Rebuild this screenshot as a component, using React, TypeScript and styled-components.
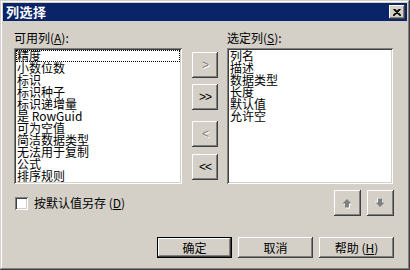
import React from 'react';
import styled, { createGlobalStyle } from 'styled-components';

const GlobalStyle = createGlobalStyle`
  html, body {
    margin: 0;
    padding: 0;
    background: #d4d0c8;
  }
  body {
    font-family: "Noto Sans CJK SC", "Liberation Sans", sans-serif;
    font-size: 12px;
    color: #000;
  }
`;

const raised = `
  box-shadow: inset -1px -1px #404040, inset 1px 1px #ffffff,
    inset -2px -2px #808080, inset 2px 2px #d4d0c8;
`;

const Window = styled.div`
  width: 410px;
  height: 270px;
  box-sizing: border-box;
  padding: 3px;
  background: #d4d0c8;
  box-shadow: inset -1px -1px #404040, inset 1px 1px #d4d0c8,
    inset -2px -2px #808080, inset 2px 2px #ffffff;
  display: flex;
  flex-direction: column;
`;

const TitleBar = styled.div`
  height: 18px;
  background: #0a246a;
  color: #fff;
  display: flex;
  align-items: center;
  justify-content: space-between;
  padding: 0 2px 0 3px;
`;

const Title = styled.span`
  font-weight: bold;
  font-size: 13px;
  line-height: 18px;
  letter-spacing: 0.5px;
`;

const CloseButton = styled.div`
  width: 16px;
  height: 14px;
  background: #d4d0c8;
  ${raised}
  display: flex;
  align-items: center;
  justify-content: center;
`;

const Body = styled.div`
  padding: 10px 13px 0 11px;
  display: flex;
  flex-direction: column;
`;

const Columns = styled.div`
  display: flex;
`;

const ListColumn = styled.div<{ $width: number; $gap: number }>`
  width: ${p => p.$width}px;
  margin-right: ${p => p.$gap}px;
  display: flex;
  flex-direction: column;
`;

const Label = styled.div`
  height: 17px;
  line-height: 14px;
  white-space: nowrap;
`;

const ListBox = styled.div`
  height: 136px;
  box-sizing: border-box;
  background: #fff;
  padding: 2px 2px;
  box-shadow: inset 1px 1px #808080, inset -1px -1px #ffffff,
    inset 2px 2px #404040, inset -2px -2px #d4d0c8;
  overflow: hidden;
`;

const ListItem = styled.div<{ $focused?: boolean }>`
  height: 12px;
  line-height: 12px;
  padding-left: 1px;
  white-space: nowrap;
  outline: ${p => (p.$focused ? '1px dotted #000' : 'none')};
  outline-offset: -1px;
`;

const ButtonColumn = styled.div`
  width: 26px;
  margin-right: 9px;
  padding-top: 21px;
  display: flex;
  flex-direction: column;
`;

const MoveButton = styled.div<{ $top: number; $disabled?: boolean }>`
  width: 26px;
  height: 26px;
  margin-top: ${p => p.$top}px;
  background: #d4d0c8;
  ${raised}
  display: flex;
  align-items: center;
  justify-content: center;
  font-family: "Liberation Sans", sans-serif;
  font-size: 12px;
  letter-spacing: -1px;
  color: ${p => (p.$disabled ? '#808080' : '#000')};
  text-shadow: ${p => (p.$disabled ? '1px 1px #ffffff' : 'none')};
`;

const OptionsRow = styled.div`
  margin-top: 6px;
  height: 26px;
  display: flex;
  align-items: center;
  justify-content: space-between;
`;

const CheckLabel = styled.label`
  display: flex;
  align-items: center;
  gap: 6px;
  padding-left: 1px;
  line-height: 14px;
`;

const CheckBox = styled.span`
  width: 13px;
  height: 13px;
  box-sizing: border-box;
  background: #fff;
  box-shadow: inset 1px 1px #808080, inset -1px -1px #ffffff,
    inset 2px 2px #404040, inset -2px -2px #d4d0c8;
`;

const OrderButtons = styled.div`
  display: flex;
  gap: 6px;
`;

const OrderButton = styled.div`
  width: 27px;
  height: 26px;
  background: #d4d0c8;
  ${raised}
  display: flex;
  align-items: center;
  justify-content: center;
`;

const Footer = styled.div`
  margin-top: 21px;
  display: flex;
  justify-content: flex-end;
  gap: 6px;
`;

const DialogButton = styled.div<{ $default?: boolean }>`
  width: 75px;
  height: 21px;
  box-sizing: border-box;
  background: #d4d0c8;
  display: flex;
  align-items: center;
  justify-content: center;
  line-height: 14px;
  ${p =>
    p.$default
      ? `box-shadow: inset 0 0 0 1px #000, inset -2px -2px #404040, inset 2px 2px #ffffff,
    inset -3px -3px #808080;`
      : raised}
`;

const Arrow = ({ up }: { up?: boolean }) => (
  <svg width="11" height="11" viewBox="0 0 11 11">
    <g transform={up ? undefined : 'rotate(180 5 5)'}>
      <path d="M5 1 L9.5 5.5 L7 5.5 L7 9.5 L3 9.5 L3 5.5 L0.5 5.5 Z" fill="#ffffff" transform="translate(1 1)" />
      <path d="M5 1 L9.5 5.5 L7 5.5 L7 9.5 L3 9.5 L3 5.5 L0.5 5.5 Z" fill="#808080" />
    </g>
  </svg>
);

const available = ['精度', '小数位数', '标识', '标识种子', '标识递增量', '是 RowGuid', '可为空值', '简洁数据类型', '无法用于复制', '公式', '排序规则'];
const selected = ['列名', '描述', '数据类型', '长度', '默认值', '允许空'];

export default function App() {
  return (
    <>
      <GlobalStyle />
      <Window>
        <TitleBar>
          <Title>列选择</Title>
          <CloseButton>
            <svg width="8" height="7" viewBox="0 0 8 7">
              <path d="M0.5 0 L7.5 7 M1.5 0 L8 6.5 M7.5 0 L0.5 7 M6.5 0 L0 6.5" stroke="#000" strokeWidth="1.1" />
            </svg>
          </CloseButton>
        </TitleBar>
        <Body>
          <Columns>
            <ListColumn $width={168} $gap={10}>
              <Label>可用列(<u>A</u>):</Label>
              <ListBox>
                {available.map((item, i) => (
                  <ListItem key={item} $focused={i === 0}>{item}</ListItem>
                ))}
              </ListBox>
            </ListColumn>
            <ButtonColumn>
              <MoveButton $top={0} $disabled>&gt;</MoveButton>
              <MoveButton $top={6}>&gt;&gt;</MoveButton>
              <MoveButton $top={11} $disabled>&lt;</MoveButton>
              <MoveButton $top={7}>&lt;&lt;</MoveButton>
            </ButtonColumn>
            <ListColumn $width={166} $gap={0}>
              <Label>选定列(<u>S</u>):</Label>
              <ListBox>
                {selected.map(item => (
                  <ListItem key={item}>{item}</ListItem>
                ))}
              </ListBox>
            </ListColumn>
          </Columns>
          <OptionsRow>
            <CheckLabel>
              <CheckBox />
              <span>按默认值另存 (<u>D</u>)</span>
            </CheckLabel>
            <OrderButtons>
              <OrderButton><Arrow up /></OrderButton>
              <OrderButton><Arrow /></OrderButton>
            </OrderButtons>
          </OptionsRow>
          <Footer>
            <DialogButton $default>确定</DialogButton>
            <DialogButton>取消</DialogButton>
            <DialogButton>帮助 (<u>H</u>)</DialogButton>
          </Footer>
        </Body>
      </Window>
    </>
  );
}
